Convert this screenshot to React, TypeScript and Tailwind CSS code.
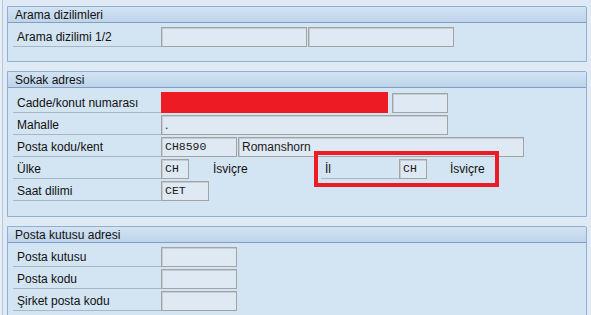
import React from "react";

const font = { fontFamily: '"Liberation Sans", Arial, sans-serif' };

function Field({ w, text, mono = true, className = "" }: { w: number; text?: string; mono?: boolean; className?: string }) {
  return (
    <div
      className={`h-[20px] shrink-0 border border-[#a3a3a3] bg-[#dfe9f4] shadow-[inset_1px_1px_0_#c4ccd4] flex items-center pl-[3px] text-[#1a1a1a] ${className}`}
      style={{ width: w }}
    >
      {text !== undefined && (
        <span
          className={mono ? "text-[11.5px] leading-none" : "text-[12px] leading-none"}
          style={mono ? { fontFamily: '"Liberation Mono", "Courier New", monospace' } : font}
        >
          {text}
        </span>
      )}
    </div>
  );
}

function Label({ text, w = 148 }: { text: string; w?: number }) {
  return (
    <div
      className="h-[20px] shrink-0 border-b border-[#a9b6c4] flex items-center pl-[4px] text-[12px] text-[#111]"
      style={{ width: w }}
    >
      {text}
    </div>
  );
}

function Group({ title, children, pt, pb }: { title: string; children: React.ReactNode; pt: string; pb: string }) {
  return (
    <div className="w-[580px] border border-[#8fb0d3] bg-[#d3e4f3] rounded-tr-[2px]">
      <div className="h-[16px] border-b border-[#819fc2] bg-gradient-to-b from-[#d3e3f3] to-[#bed4ea] flex items-center pl-[7px] text-[12px] text-[#111]">
        {title}
      </div>
      <div className={`flex flex-col gap-[2px] pl-[5px] ${pt} ${pb}`}>{children}</div>
    </div>
  );
}

export default function App() {
  return (
    <div className="w-[591px] h-[315px] overflow-hidden bg-[#dfeaf5] flex" style={font}>
      <div className="w-[2px] bg-[#e6eef7]" />
      <div className="w-[1px] bg-[#b8c7d8]" />
      <div className="flex flex-col pl-[4px] pt-[6px] gap-[9px]">
        <Group title="Arama dizilimleri" pt="pt-[4px]" pb="pb-[14px]">
          <div className="flex gap-[1px]">
            <div className="flex">
              <Label text="Arama dizilimi 1/2" />
              <Field w={146} />
            </div>
            <Field w={146} />
          </div>
        </Group>

        <Group title="Sokak adresi" pt="pt-[5px]" pb="pb-[15px]">
          <div className="flex items-end">
            <Label text="Cadde/konut numarası" />
            <div className="w-[227px] h-[21px] -mt-[2px] bg-[#ed1c24] shrink-0" />
            <Field w={56} className="ml-[4px]" />
          </div>
          <div className="flex">
            <Label text="Mahalle" />
            <Field w={287} text="." mono={false} />
          </div>
          <div className="flex">
            <Label text="Posta kodu/kent" />
            <Field w={76} text="CH8590" />
            <Field w={286} text="Romanshorn" mono={false} className="ml-[1px]" />
          </div>
          <div className="flex relative items-center">
            <Label text="Ülke" />
            <Field w={28} text="CH" />
            <span className="ml-[24px] text-[12px] text-[#111] w-[108px]">İsviçre</span>
            <Label text="İl" w={78} />
            <Field w={28} text="CH" />
            <span className="ml-[23px] text-[12px] text-[#111]">İsviçre</span>
            <div className="absolute left-[301px] top-[-8px] w-[185px] h-[36px] border-[4px] border-[#ed1c24]" />
          </div>
          <div className="flex">
            <Label text="Saat dilimi" />
            <Field w={48} text="CET" />
          </div>
        </Group>

        <Group title="Posta kutusu adresi" pt="pt-[4px]" pb="pb-[14px]">
          <div className="flex">
            <Label text="Posta kutusu" />
            <Field w={76} />
          </div>
          <div className="flex">
            <Label text="Posta kodu" />
            <Field w={76} />
          </div>
          <div className="flex">
            <Label text="Şirket posta kodu" />
            <Field w={76} />
          </div>
        </Group>
      </div>
    </div>
  );
}
